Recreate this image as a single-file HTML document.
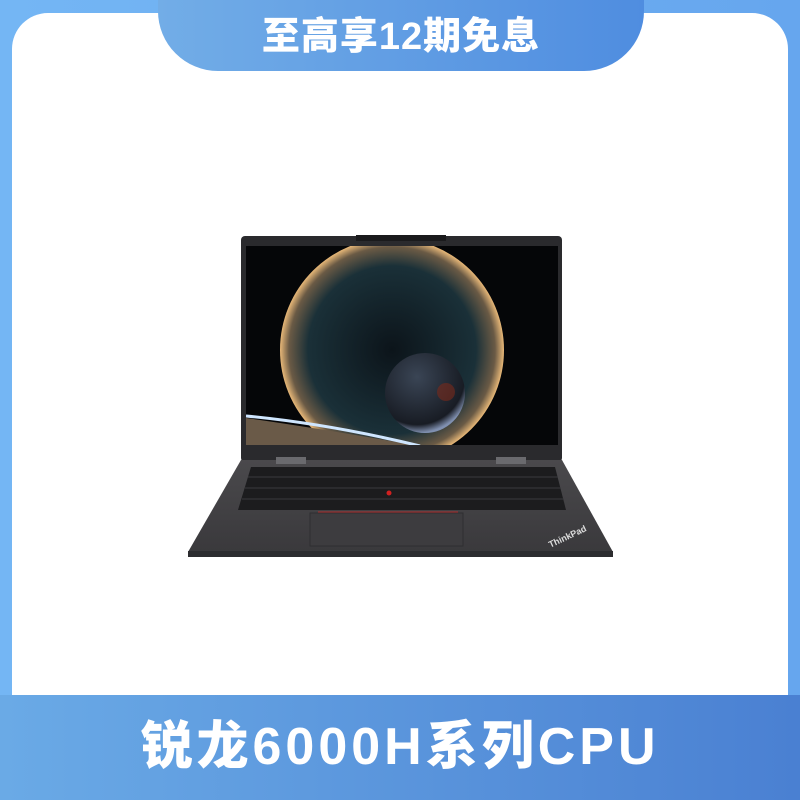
<!DOCTYPE html>
<html><head><meta charset="utf-8"><style>
*{margin:0;padding:0;box-sizing:border-box}
body{width:800px;height:800px;overflow:hidden;background:linear-gradient(90deg,#74b6f4,#66a6ee);position:relative;font-family:"Liberation Sans","Noto Sans CJK SC",sans-serif}
.card{position:absolute;left:12px;top:13px;width:776px;height:700px;background:#fff;border-radius:36px 36px 0 0}
.tab{position:absolute;left:158px;top:0;width:486px;height:71px;background:linear-gradient(90deg,#72ade7,#4f8de0);border-radius:0 0 60px 60px;color:#fff;font-weight:900;font-size:38px;text-align:center;line-height:74px;letter-spacing:1px}
.band{position:absolute;left:0;top:695px;width:800px;height:105px;background:linear-gradient(90deg,#6aaae6,#4a80d2);color:#fff;font-weight:900;font-size:52px;text-align:center;line-height:104px;letter-spacing:4px}
svg{position:absolute;left:0;top:0}
</style></head><body>
<div class="card"></div>
<div class="tab">至高享12期免息</div>
<svg width="800" height="800">
<defs>
<radialGradient id="pl" cx="0.5" cy="0.5" r="0.5"><stop offset="0" stop-color="#0c141a"/><stop offset="0.75" stop-color="#1a3038"/><stop offset="0.92" stop-color="#6a5a45"/><stop offset="1" stop-color="#e8b878"/></radialGradient>
<radialGradient id="sp" cx="0.4" cy="0.3" r="0.7"><stop offset="0" stop-color="#3a4555"/><stop offset="0.85" stop-color="#181c24"/><stop offset="1" stop-color="#8090b0"/></radialGradient>
<linearGradient id="base" x1="0" y1="0" x2="0" y2="1"><stop offset="0" stop-color="#4a494c"/><stop offset="1" stop-color="#3a393c"/></linearGradient>
<clipPath id="scr"><rect x="246" y="246" width="312" height="199"/></clipPath>
</defs>
<rect x="241" y="236" width="321" height="226" rx="4" fill="#2a2a2d"/>
<rect x="356" y="235" width="90" height="6" fill="#1a1a1c"/>
<rect x="246" y="246" width="312" height="199" fill="#050608"/>
<g clip-path="url(#scr)">
<circle cx="392" cy="350" r="112" fill="url(#pl)"/>
<path d="M246 418 Q330 430 430 448 L246 448Z" fill="#6a5a48"/>
<path d="M246 416 Q330 424 420 446" stroke="#cfe6ff" stroke-width="3" fill="none"/>
<circle cx="425" cy="393" r="40" fill="url(#sp)"/>
<circle cx="446" cy="392" r="9" fill="#7a2a1a" opacity="0.6"/>
</g>
<path d="M241 460 L562 460 L613 552 L188 552 Z" fill="url(#base)"/>
<rect x="188" y="551" width="425" height="6" fill="#2c2c2f"/>
<rect x="276" y="457" width="30" height="7" fill="#6a6a6e"/>
<rect x="496" y="457" width="30" height="7" fill="#6a6a6e"/>
<path d="M251 467 L555 467 L566 510 L238 510 Z" fill="#1c1c1e"/>
<g stroke="#3a3a3e" stroke-width="1">
<line x1="248" y1="477" x2="558" y2="477"/><line x1="245" y1="488" x2="561" y2="488"/><line x1="242" y1="499" x2="564" y2="499"/>
</g>
<circle cx="389" cy="493" r="2.5" fill="#d02020"/>
<rect x="310" y="513" width="153" height="33" fill="#3d3c3f" stroke="#2e2e31"/>
<line x1="318" y1="512" x2="458" y2="512" stroke="#b03030" stroke-width="1"/>
<text x="548" y="543" fill="#ddd" font-size="9" font-weight="bold" transform="rotate(-25 560 540)">ThinkPad</text>
</svg>
<div class="band">锐龙6000H系列CPU</div>
</body></html>
